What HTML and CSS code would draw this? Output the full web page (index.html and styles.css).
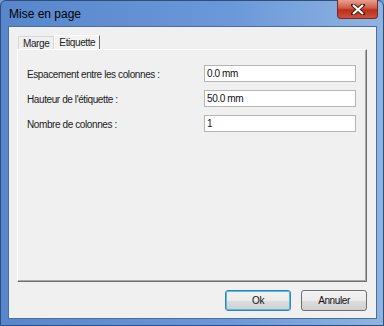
FILE: index.html
```html
<!DOCTYPE html>
<html>
<head>
 <meta charset="UTF-8">
 <title>Mise en page</title>
 <link rel="stylesheet" href="styles.css">
</head>
<body>
<div class="window">
  <div class="titlebar">
    <div class="caption">Mise en page</div>
    <div class="close"><svg width="14" height="11" viewBox="0 0 14 11"><path d="M2 1 L12 10 M12 1 L2 10" stroke="#4a1a14" stroke-width="4" stroke-linecap="square"/><path d="M2 1 L12 10 M12 1 L2 10" stroke="#fff" stroke-width="2.2"/></svg></div>
  </div>
  <div class="client">
    <div class="tabs">
      <div class="tab">Marge</div>
      <div class="tab active">Etiquette</div>
    </div>
    <div class="panel">
      <div class="row"><label>Espacement entre les colonnes :</label><input type="text" value="0.0 mm"></div>
      <div class="row"><label>Hauteur de l'étiquette :</label><input type="text" value="50.0 mm"></div>
      <div class="row"><label>Nombre de colonnes :</label><input type="text" value="1"></div>
    </div>
    <div class="buttons">
      <button class="btn default">Ok</button>
      <button class="btn">Annuler</button>
    </div>
  </div>
</div>
</body>
</html>
```

FILE: styles.css
```css
html, body { margin: 0; padding: 0; }
body { width: 384px; height: 326px; overflow: hidden; background: #6f9bd3;
  font-family: "Liberation Sans", Arial, sans-serif; font-size: 10px; letter-spacing: -0.4px; color: #1a1a1a; }
.window { width: 384px; height: 326px; box-sizing: border-box;
  border: 1px solid #2f4f7a; border-radius: 6px 6px 0 0;
  background: linear-gradient(to right, #5886cc 0, #6a98d8 60%, #8fb4e2 100%);
  display: flex; flex-direction: column; padding: 0 6px 6px 7px; }
.titlebar { height: 25px; display: flex; align-items: flex-start; position: relative; }
.caption { color: #000; font-size: 12px; letter-spacing: 0; padding: 6px 0 0 1px; }
.close { position: absolute; right: -1px; top: -1px; width: 41px; height: 19px;
  border: 1px solid #7a2a20; border-top: 0; border-radius: 0 0 4px 4px;
  background: linear-gradient(to bottom, #e8a090 0, #d05a46 45%, #b8301c 55%, #d0503a 100%);
  display: flex; align-items: center; justify-content: center; box-sizing: border-box; }
.client { flex: 1; background: #f0f0f0; border: 1px solid #4a6e9e;
  display: flex; flex-direction: column; padding: 8px 9px 7px 8px; }
.tabs { display: flex; align-items: flex-end; padding-left: 1px; }
.tab { height: 12px; padding: 0 4px; line-height: 13px;
  border: 1px solid #d8d8d8; border-bottom: 0; color: #222; }
.tab.active { background: #f4f4f4; border-left: 1px solid #fff; border-right: 1px solid #6a6a6a;
  border-top: 1px solid #fff; height: 13px; line-height: 13px; }
.panel { flex: 1; border: 1px solid #fff; border-right-color: #707070; border-bottom-color: #707070;
  box-shadow: inset -1px -1px 0 #a8a8a8; background: #f0f0f0;
  padding: 15px 10px 0 9px; display: flex; flex-direction: column; gap: 8px; }
.row { display: flex; align-items: center; justify-content: space-between; height: 17px; }
.row label { color: #222; padding-top: 2px; }
.row input { width: 152px; height: 17px; box-sizing: border-box; border: 1px solid #b5b5b5;
  background: #fff; font: inherit; letter-spacing: inherit; color: #111; padding: 0 2px; margin: 0; outline: none; }
.buttons { display: flex; justify-content: flex-end; gap: 10px; padding-top: 8px; padding-right: 0; }
.btn { width: 66px; height: 21px; box-sizing: border-box; border: 1px solid #707070; border-radius: 3px;
  background: linear-gradient(to bottom, #f2f2f2 0, #ebebeb 50%, #dddddd 51%, #cfcfcf 100%);
  font: inherit; letter-spacing: inherit; color: #111; padding: 0; }
.btn.default { border-color: #3c7fb1; box-shadow: inset 0 0 0 1px #48c1f0; }
```
